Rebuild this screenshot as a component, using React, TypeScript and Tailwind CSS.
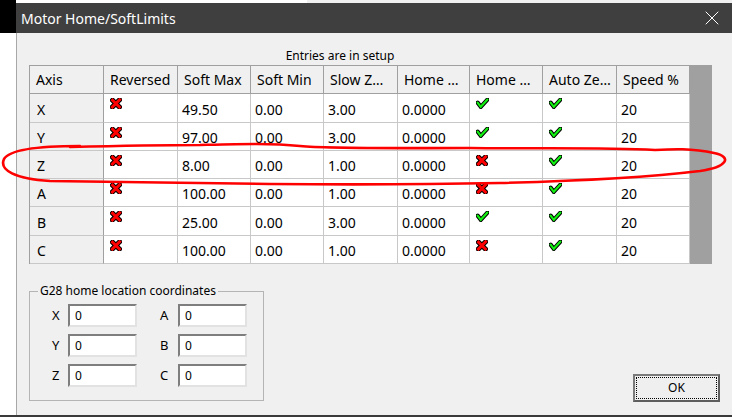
import React from "react";
import { X } from "lucide-react";

const widths = [
  "w-[74px]",
  "w-[74px]",
  "w-[73px]",
  "w-[73px]",
  "w-[74px]",
  "w-[72px]",
  "w-[73px]",
  "w-[74px]",
  "w-[73px]",
];

const heads = ["Axis", "Reversed", "Soft Max", "Soft Min", "Slow Z…", "Home …", "Home …", "Auto Ze…", "Speed %"];

const rowHeights = ["h-[29px]", "h-[28px]", "h-[28px]", "h-[28px]", "h-[29px]", "h-[28px]"];

// "n" = red cross, "y" = green tick
const rows = [
  ["X", "n", "49.50", "0.00", "3.00", "0.0000", "y", "y", "20"],
  ["Y", "n", "97.00", "0.00", "3.00", "0.0000", "y", "y", "20"],
  ["Z", "n", "8.00", "0.00", "1.00", "0.0000", "n", "y", "20"],
  ["A", "n", "100.00", "0.00", "1.00", "0.0000", "n", "y", "20"],
  ["B", "n", "25.00", "0.00", "3.00", "0.0000", "y", "y", "20"],
  ["C", "n", "100.00", "0.00", "1.00", "0.0000", "n", "y", "20"],
];

function Cross() {
  return (
    <svg width="12" height="11" viewBox="0 0 12 11">
      <path d="M2.6 2.2 L9.4 9 M9.6 1.8 L2.4 9" stroke="#000" strokeWidth="5" strokeLinecap="square" fill="none" />
      <path d="M2.6 2.2 L9.4 9 M9.6 1.8 L2.4 9" stroke="#ff0000" strokeWidth="3" strokeLinecap="square" fill="none" />
    </svg>
  );
}

function Tick() {
  return (
    <svg width="13" height="11" viewBox="0 0 13 11">
      <path d="M1.6 4.6 L4.8 8.8 L11.4 1.6" stroke="#000" strokeWidth="4.2" strokeLinejoin="miter" strokeLinecap="round" fill="none" />
      <path d="M1.6 4.6 L4.8 8.8 L11.4 1.6" stroke="#12f012" strokeWidth="2.2" strokeLinejoin="miter" strokeLinecap="round" fill="none" />
    </svg>
  );
}

function Field({ label, pad }: { label: string; pad: string }) {
  return (
    <>
      <span className={`${pad} text-[13px]`}>{label}</span>
      <input
        readOnly
        defaultValue="0"
        className="w-[69px] h-[23px] bg-white border-2 border-t-[#7e7e7e] border-l-[#7e7e7e] border-r-[#e2e2e2] border-b-[#e2e2e2] pl-[5px] text-[12px] outline-none"
      />
    </>
  );
}

export default function App() {
  return (
    <div className="relative w-[732px] h-[417px] overflow-hidden bg-white font-['Noto_Sans',sans-serif] text-black flex flex-col">
      <div className="flex h-[3px]">
        <div className="w-[16px] bg-black" />
        <div className="w-[291px] bg-white" />
        <div className="flex-1 bg-[#f0f0f0]" />
      </div>

      <div className="flex h-[412px]">
        <div className="w-[16px] flex flex-col">
          <div className="h-[30px] bg-black" />
          <div className="flex-1 bg-white" />
        </div>

        <div className="flex-1 flex flex-col">
          <div className="h-[30px] bg-[#3f3f3f] flex items-center justify-between pl-[5px] pr-[8px] text-white text-[14px]">
            <span>Motor Home/SoftLimits</span>
            <X size={24} strokeWidth={1} />
          </div>

          <div className="flex-1 bg-[#f0f0f0] border-l border-[#a8a8a8] pl-[12px] pt-[15px] flex flex-col">
            <div className="w-[622px] h-[16px] text-center text-[12px] leading-[16px]">Entries are in setup</div>

            <div className="mt-[1px] flex w-max border-l border-t border-[#a0a0a0]">
              <div className="flex flex-col">
                <div className="flex h-[28px]">
                  {heads.map((h, i) => (
                    <div
                      key={i}
                      className={`${widths[i]} h-full bg-[#f0f0f0] border-r border-b border-[#a0a0a0] flex items-center pl-[6px] text-[14px] whitespace-nowrap overflow-hidden`}
                    >
                      {h}
                    </div>
                  ))}
                </div>
                {rows.map((r, ri) => (
                  <div key={ri} className={`flex ${rowHeights[ri]}`}>
                    {r.map((c, ci) => {
                      if (ci === 0)
                        return (
                          <div
                            key={ci}
                            className={`${widths[ci]} h-full bg-[#f0f0f0] border-r border-r-[#a0a0a0] border-b border-b-[#c8c8c8] flex items-center pl-[7px] pt-[2px] text-[14px]`}
                          >
                            {c}
                          </div>
                        );
                      const icon = ci === 1 || ci === 6 || ci === 7;
                      return (
                        <div
                          key={ci}
                          className={`${widths[ci]} h-full bg-white border-r border-b border-[#c8c8c8] flex text-[14px] ${
                            icon ? "items-start pl-[6px] pt-[4px]" : "items-center pl-[4px] pt-[2px]"
                          }`}
                        >
                          {icon ? c === "y" ? <Tick /> : <Cross /> : c}
                        </div>
                      );
                    })}
                  </div>
                ))}
              </div>
              <div className="w-[22px] bg-[#a0a0a0]" />
            </div>

            <div className="flex-1 mt-[19px] flex">
              <fieldset className="self-start w-[235px] border border-[#b4b4b4] px-0 pt-[5px] pb-[13px]">
                <legend className="ml-[8px] px-[2px] text-[12px] leading-[16px]">G28 home location coordinates</legend>
                <div className="grid grid-cols-[38px_69px_41px_69px] gap-y-[7px] items-center">
                  <Field label="X" pad="pl-[22px]" />
                  <Field label="A" pad="pl-[23px]" />
                  <Field label="Y" pad="pl-[22px]" />
                  <Field label="B" pad="pl-[23px]" />
                  <Field label="Z" pad="pl-[22px]" />
                  <Field label="C" pad="pl-[23px]" />
                </div>
              </fieldset>
              <div className="flex-1 flex justify-end items-end pr-[12px] pb-[13px]">
                <button className="w-[87px] h-[28px] bg-[#efefef] border-2 border-t-[#7a7a7a] border-l-[#7a7a7a] border-r-[#5e5e5e] border-b-[#5e5e5e] p-[1px] flex">
                  <span className="flex-1 self-stretch border border-dotted border-black flex items-center justify-center text-[12px]">
                    OK
                  </span>
                </button>
              </div>
            </div>
          </div>
        </div>
      </div>

      <div className="h-[2px] bg-[#3a3a3a]" />

      <svg className="absolute left-0 top-0 pointer-events-none" width="732" height="417" viewBox="0 0 732 417">
        <path
          d="M 80 146 C 45 146, 10 149, 4 159 C -1 170, 15 179, 50 181 C 120 182, 200 183, 270 184 C 380 185, 450 184, 500 183 C 580 181, 650 177, 700 171 C 727 167, 733 157, 714 153 C 692 148, 672 149, 655 150 C 600 147, 520 149, 470 148 C 400 148, 330 149, 300 146 C 270 143, 240 144, 200 145 C 150 145, 110 146, 70 147"
          stroke="#ff0000"
          strokeWidth="2.6"
          fill="none"
          strokeLinecap="round"
        />
      </svg>
    </div>
  );
}
